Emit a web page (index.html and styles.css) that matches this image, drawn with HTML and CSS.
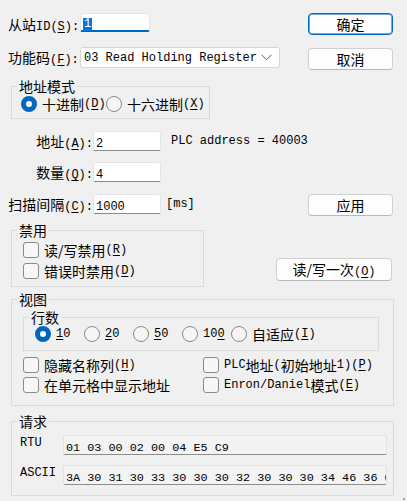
FILE: index.html
```html
<!DOCTYPE html>
<html lang="zh-CN">
<head>
    <meta charset="UTF-8">
    <meta name="viewport" content="width=device-width, initial-scale=1.0">
    <title>读/写定义</title>
    <link rel="stylesheet" href="styles.css">
</head>
<body>

    <div class="dlg">
        <div class="row r1">
            <label class="lbl w72">从站<span class="en">ID(<u>S</u>):</span></label>
            <div class="edit focus w70"><span class="sel">1</span></div>
            <button class="btn default">确定</button>
        </div>

        <div class="row r2">
            <label class="lbl w72">功能码<span class="en">(<u>F</u>):</span></label>
            <div class="combo">
                <span class="en">03 Read Holding Register</span>
                <svg class="chev" width="11" height="7" viewBox="0 0 11 7"><polyline points="0.5,0.8 5.5,5.8 10.5,0.8" fill="none" stroke="#5f5f5f" stroke-width="1"/></svg>
            </div>
            <button class="btn">取消</button>
        </div>

        <fieldset class="grp g-mode">
            <legend>地址模式</legend>
            <div class="opts">
                <span class="opt w85"><i class="radio on"></i>十进制<span class="en">(<u>D</u>)</span></span>
                <span class="opt"><i class="radio"></i>十六进制<span class="en">(<u>X</u>)</span></span>
            </div>
        </fieldset>

        <div class="row r-addr">
            <label class="lbl w85 right">地址<span class="en">(<u>A</u>):</span></label>
            <div class="edit w68"><span class="en">2</span></div>
            <span class="en note">PLC address = 40003</span>
        </div>

        <div class="row r-qty">
            <label class="lbl w85 right">数量<span class="en">(<u>Q</u>):</span></label>
            <div class="edit w68"><span class="en">4</span></div>
        </div>

        <div class="row r-scan">
            <label class="lbl w85 right">扫描间隔<span class="en">(<u>C</u>):</span></label>
            <div class="edit w68"><span class="en">1000</span></div>
            <span class="en unit">[ms]</span>
            <button class="btn">应用</button>
        </div>

        <div class="row r-dis">
            <fieldset class="grp g-dis">
                <legend>禁用</legend>
                <div class="checks">
                    <span class="chk"><i class="box"></i>读/写禁用<span class="en">(<u>R</u>)</span></span>
                    <span class="chk"><i class="box"></i>错误时禁用<span class="en">(<u>D</u>)</span></span>
                </div>
            </fieldset>
            <button class="btn once">读/写一次<span class="en">(<u>O</u>)</span></button>
        </div>

        <fieldset class="grp g-view">
            <legend>视图</legend>
            <fieldset class="grp g-rows">
                <legend>行数</legend>
                <div class="opts">
                    <span class="opt w49"><i class="radio on"></i><span class="en"><u>1</u>0</span></span>
                    <span class="opt w49"><i class="radio"></i><span class="en"><u>2</u>0</span></span>
                    <span class="opt w49"><i class="radio"></i><span class="en"><u>5</u>0</span></span>
                    <span class="opt w49"><i class="radio"></i><span class="en">10<u>0</u></span></span>
                    <span class="opt"><i class="radio"></i>自适应<span class="en">(<u>I</u>)</span></span>
                </div>
            </fieldset>
            <div class="grid2">
                <span class="chk"><i class="box"></i>隐藏名称列<span class="en">(<u>H</u>)</span></span>
                <span class="chk"><i class="box"></i><span class="en">PLC</span>地址<span class="en">(</span>初始地址<span class="en">1)(<u>P</u>)</span></span>
                <span class="chk"><i class="box"></i>在单元格中显示地址</span>
                <span class="chk"><i class="box"></i><span class="en">Enron/Daniel</span>模式<span class="en">(<u>E</u>)</span></span>
            </div>
        </fieldset>

        <fieldset class="grp g-req">
            <legend>请求</legend>
            <div class="req first">
                <span class="en rlbl">RTU</span>
                <div class="ro"><span class="en">01 03 00 02 00 04 E5 C9</span></div>
            </div>
            <div class="req">
                <span class="en rlbl">ASCII</span>
                <div class="ro"><span class="en">3A 30 31 30 33 30 30 30 32 30 30 30 34 46 36 0D 0A</span></div>
            </div>
        </fieldset>

        <div class="grip">
            <svg width="9" height="9" viewBox="0 0 9 9">
                <rect x="7" y="1" width="2" height="2" fill="#a0a0a0"/>
                <rect x="4" y="4" width="2" height="2" fill="#a0a0a0"/>
                <rect x="7" y="4" width="2" height="2" fill="#a0a0a0"/>
                <rect x="1" y="7" width="2" height="2" fill="#a0a0a0"/>
                <rect x="4" y="7" width="2" height="2" fill="#a0a0a0"/>
                <rect x="7" y="7" width="2" height="2" fill="#a0a0a0"/>
            </svg>
        </div>
    </div>

</body>
</html>
```

FILE: styles.css
```css
* {
    box-sizing: border-box;
}
body {
    margin: 0;
    background-color: #f0f0f0;
    font-family: "Noto Sans CJK SC", "Noto Sans", sans-serif;
    font-size: 14px;
    color: #000;
}
.dlg {
    width: 407px;
    height: 501px;
    padding: 13px 14px 0 8px;
    overflow: hidden;
}
.en {
    font-family: "Liberation Mono", "DejaVu Sans Mono", monospace;
    font-size: 12px;
}
u {
    text-decoration: underline;
    text-underline-offset: 2px;
}
.row {
    display: flex;
    align-items: center;
}
.lbl {
    white-space: nowrap;
}
.right {
    text-align: right;
}
.w72 { width: 72px; }
.w85 { width: 85px; }
.w70 { width: 70px; }
.w68 { width: 68px; }
.w49 { width: 49px; }

/* text boxes */
.edit {
    height: 20px;
    background-color: #fff;
    border: 1px solid #e5e5e5;
    border-bottom-color: #8b8b8b;
    border-radius: 2px;
    padding-left: 2px;
    line-height: 18px;
    white-space: nowrap;
}
.edit.focus {
    height: 19px;
    border-bottom: 2px solid #0067c0;
    line-height: 14px;
}
.sel {
    display: inline-block;
    margin-top: 2px;
    padding: 0 1px;
    background-color: #0078d7;
    color: #fff;
    font-family: "Liberation Mono", monospace;
    font-size: 12px;
    line-height: 13px;
}
.combo {
    width: 200px;
    height: 21px;
    display: flex;
    align-items: center;
    background-color: #fff;
    border: 1px solid #d6d6d6;
    border-radius: 3px;
    padding-left: 3px;
}
.chev {
    margin-left: auto;
    margin-right: 7px;
}

/* buttons */
.btn {
    width: 85px;
    height: 22px;
    margin-left: auto;
    padding: 0;
    background-color: #fdfdfd;
    border: 1px solid #d0d0d0;
    border-bottom-color: #b8b8b8;
    border-radius: 4px;
    font-family: inherit;
    font-size: 14px;
    line-height: 20px;
    color: #000;
}
.btn.default {
    border-color: #0067c0;
    box-shadow: inset 0 0 0 1px rgba(0, 103, 192, 0.55);
}
.btn.once {
    width: 116px;
    height: 23px;
    margin-top: 37px;
    margin-right: 1px;
    align-self: flex-start;
}

/* rows */
.r1 {
    align-items: flex-start;
}
.r1 .lbl {
    line-height: 22px;
}
.r2 {
    margin-top: 9px;
    align-items: flex-start;
}
.r2 .lbl {
    line-height: 21px;
}
.r2 .btn {
    margin-top: 1px;
}
.r-addr {
    margin-top: 12px;
}
.r-qty {
    margin-top: 11px;
}
.r-scan {
    margin-top: 12px;
    align-items: flex-start;
}
.r-scan .lbl,
.r-scan .unit {
    line-height: 20px;
}
.note {
    margin-left: 10px;
}
.unit {
    margin-left: 5px;
}
.r-dis {
    margin-top: 4px;
    align-items: flex-start;
}

/* group boxes */
.grp {
    margin: 0;
    min-width: 0;
    padding: 0 0 0 5px;
    border: 1px solid #dadada;
}
.grp legend {
    padding: 0 2px;
    line-height: 18px;
}
.g-mode {
    margin: 6px 0 0 3px;
    width: 199px;
    padding-bottom: 5px;
}
.g-mode .opts {
    margin-left: 4px;
    height: 18px;
}
.g-dis {
    margin-left: 3px;
    width: 193px;
    padding-bottom: 5px;
}
.g-view {
    margin: 3px 0 0 3px;
    width: 383px;
    padding-bottom: 10px;
}
.g-rows {
    margin: 1px 0 0 6px;
    width: 356px;
    padding-bottom: 8px;
}
.g-rows legend {
    line-height: 16px;
}
.g-rows .opts {
    margin-left: 6px;
    height: 17px;
}
.g-req {
    margin: 6px 0 0 3px;
    width: 383px;
    padding-bottom: 10px;
}

/* radios and checkboxes */
.opts {
    display: flex;
    align-items: center;
}
.opt,
.chk {
    display: flex;
    align-items: center;
    white-space: nowrap;
}
.w85 {
    flex: none;
}
.radio {
    width: 16px;
    height: 16px;
    margin-right: 5px;
    flex: none;
    border: 1px solid #8a8a8a;
    border-radius: 50%;
    background-color: #f6f6f6;
}
.radio.on {
    border: 5px solid #0067c0;
    background-color: #fff;
}
.box {
    width: 16px;
    height: 16px;
    margin-right: 5px;
    flex: none;
    border: 1px solid #8a8a8a;
    border-radius: 3px;
    background-color: #f7f7f7;
}
.checks {
    margin-left: 6px;
}
.checks .chk {
    height: 21px;
}
.grid2 {
    display: grid;
    grid-template-columns: 180px auto;
    margin: 4px 0 0 6px;
}
.grid2 .chk {
    height: 20px;
}

/* request fields */
.req {
    display: flex;
    align-items: flex-start;
    margin: 10px 0 0 3px;
}
.req.first {
    margin-top: 5px;
}
.rlbl {
    width: 43px;
    line-height: 16px;
}
.ro {
    width: 324px;
    height: 20px;
    overflow: hidden;
    white-space: nowrap;
    background-color: #f3f3f3;
    border: 1px solid #e2e2e2;
    border-bottom-color: #8d8d8d;
    border-radius: 2px;
    padding-left: 2px;
    line-height: 18px;
}
.ro .en {
    font-size: 11.8px;
}
.grip {
    display: flex;
    justify-content: flex-end;
    margin: 1px -12px 0 0;
}
```
